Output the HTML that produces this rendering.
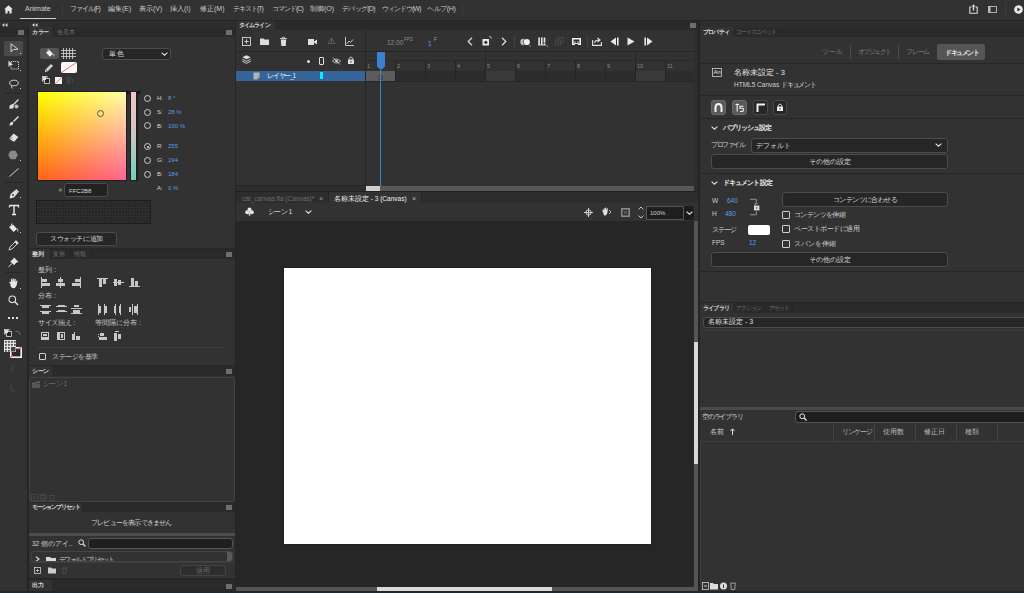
<!DOCTYPE html>
<html><head><meta charset="utf-8">
<style>
*{margin:0;padding:0;box-sizing:border-box}
html,body{width:1024px;height:593px;overflow:hidden;background:#1f1f1f}
body{font-family:"Liberation Sans",sans-serif;position:relative;font-feature-settings:"palt"}
.a{position:absolute}
.t{position:absolute;font-size:7px;line-height:8px;color:#c8c8c8;white-space:nowrap}
.hd{position:absolute;background:#2a2a2a}
.tab{position:absolute;background:#323232;font-size:6px;line-height:10px;color:#d8d8d8;padding-left:3px;font-weight:bold;white-space:nowrap}
.tabd{position:absolute;font-size:6px;line-height:10px;color:#707070;padding-left:3px;white-space:nowrap;border-right:1px solid #262626}
.mi{position:absolute;width:6px;height:5px;background:#6e6e6e}
.btn{position:absolute;background:#262626;border:1px solid #4c4c4c;border-radius:3px;font-size:7px;color:#d8d8d8;text-align:center;white-space:nowrap}
.ln{position:absolute;background:#242424}
.blue{color:#5b9ee8}
svg{position:absolute;overflow:visible}
</style></head><body>
<!-- ============ MENU BAR ============ -->
<div class="a" style="left:0;top:0;width:1024px;height:21px;background:#323232"></div>
<svg style="left:4px;top:5px" width="9" height="9" viewBox="0 0 9 9"><path d="M4.5 0.3 L8.8 4.3 L7.6 4.3 L7.6 8.6 L5.4 8.6 L5.4 6 L3.6 6 L3.6 8.6 L1.4 8.6 L1.4 4.3 L0.2 4.3 Z" fill="#e8e8e8"/></svg>
<div class="t" style="left:25px;top:5px;font-size:7px;color:#d0d0d0">Animate</div>
<div class="a" style="left:20px;top:18px;width:36px;height:1px;background:#d0d0d0"></div>
<div class="a" style="left:62px;top:4px;width:1px;height:12px;background:#3c3c3c"></div>
<div class="t" style="left:70px;top:5px;letter-spacing:-1px">ファイル(F)</div>
<div class="t" style="left:108px;top:5px">編集(E)</div>
<div class="t" style="left:139px;top:5px">表示(V)</div>
<div class="t" style="left:170px;top:5px">挿入(I)</div>
<div class="t" style="left:200px;top:5px">修正(M)</div>
<div class="t" style="left:233px;top:5px;letter-spacing:-1px">テキスト(T)</div>
<div class="t" style="left:272px;top:5px;letter-spacing:-1px">コマンド(C)</div>
<div class="t" style="left:310px;top:5px">制御(O)</div>
<div class="t" style="left:342px;top:5px;letter-spacing:-0.7px">デバッグ(D)</div>
<div class="t" style="left:382px;top:5px;letter-spacing:-1px">ウィンドウ(W)</div>
<div class="t" style="left:427px;top:5px;letter-spacing:-0.4px">ヘルプ(H)</div>
<div class="a" style="left:462px;top:4px;width:1px;height:12px;background:#3c3c3c"></div>
<!-- right icons -->
<svg style="left:969px;top:4px" width="9" height="10" viewBox="0 0 9 10"><path d="M4.5 0.8 V6.5" stroke="#e0e0e0" stroke-width="1.4"/><path d="M2.6 2.6 L4.5 0.5 L6.4 2.6 Z" fill="#e0e0e0"/><path d="M2.5 3 H0.8 V9.2 H8.2 V3 H6.5" stroke="#dcdcdc" stroke-width="1.1" fill="none"/></svg>
<svg style="left:988px;top:6px" width="9" height="7" viewBox="0 0 9 7"><rect x="0.5" y="0.5" width="8" height="6" stroke="#bdbdbd" stroke-width="0.9" fill="none"/><rect x="0.5" y="0.5" width="2" height="6" fill="#bdbdbd"/></svg>
<div class="a" style="left:1005px;top:3px;width:1px;height:13px;background:#3c3c3c"></div>
<svg style="left:1013.5px;top:4.5px" width="9" height="9" viewBox="0 0 9 9"><circle cx="4.5" cy="4.5" r="4.3" fill="#ececec"/><path d="M3.3 2.5 L6.6 4.5 L3.3 6.5 Z" fill="#323232"/></svg>

<!-- collapse strip -->
<div class="a" style="left:0;top:20px;width:1024px;height:1px;background:#262626"></div>
<div class="a" style="left:0;top:21px;width:1024px;height:6px;background:#2e2e2e"></div>
<svg style="left:2px;top:23px" width="6" height="4" viewBox="0 0 6 4"><path d="M0 2 L2.5 0 V4 Z M3 2 L5.5 0 V4 Z" fill="#cfcfcf"/></svg>
<svg style="left:32px;top:23px" width="6" height="4" viewBox="0 0 6 4"><path d="M0 2 L2.5 0 V4 Z M3 2 L5.5 0 V4 Z" fill="#cfcfcf"/></svg><div class="a" style="left:4px;top:30px;width:1px;height:4px;background:#6a9ad0"></div>

<!-- ============ LEFT TOOLBAR ============ -->
<div class="a" style="left:0;top:27px;width:27px;height:566px;background:#323232"></div>
<div class="hd" style="left:0;top:27px;width:27px;height:10px"></div>
<div class="mi" style="left:18px;top:30px"></div>
<div class="a" style="left:27px;top:27px;width:2px;height:566px;background:#252525"></div>

<!-- tool icons -->
<div class="a" style="left:4px;top:41px;width:19px;height:15px;background:#4a4a4a;border-radius:2px"></div>
<svg style="left:10px;top:43px" width="9" height="10" viewBox="0 0 9 10"><path d="M1 0.8 L1 8.8 L3.3 6.6 L8 6.2 Z" stroke="#e0e0e0" stroke-width="0.9" fill="none"/></svg>
<div class="a" style="left:20px;top:53px;width:1px;height:1px;background:#ccc"></div>
<svg style="left:8px;top:60px" width="12" height="11" viewBox="0 0 12 11"><path d="M0.5 0.5 L0.5 7 L2.5 5 L5 5 Z" fill="#e0e0e0"/><rect x="3" y="1.5" width="7.5" height="7.5" stroke="#d8d8d8" stroke-width="0.9" stroke-dasharray="1.2 0.8" fill="none"/></svg>
<div class="a" style="left:20px;top:70px;width:1px;height:1px;background:#ccc"></div>
<svg style="left:9px;top:79px" width="10" height="10" viewBox="0 0 10 10"><ellipse cx="5" cy="4" rx="4.3" ry="2.8" stroke="#d8d8d8" stroke-width="0.9" fill="none"/><path d="M2.5 6 Q2 8 3.5 9.5" stroke="#d8d8d8" stroke-width="0.9" fill="none"/></svg>
<div class="a" style="left:20px;top:88px;width:1px;height:1px;background:#ccc"></div>
<div class="a" style="left:5px;top:93px;width:17px;height:1px;background:#262626"></div>
<svg style="left:9px;top:99px" width="10" height="10" viewBox="0 0 10 10"><path d="M9.5 0.5 L4 6 M1 9 Q1 6 3.5 6 Q5 7 3.5 8.8 Z" stroke="#e0e0e0" stroke-width="1.3" fill="#e0e0e0"/><circle cx="7.5" cy="7.5" r="2" fill="#bbb"/></svg>
<svg style="left:9px;top:116px" width="10" height="10" viewBox="0 0 10 10"><path d="M9.5 0.5 L4.5 5.5" stroke="#e0e0e0" stroke-width="1.5"/><path d="M0.5 9.5 Q0.8 6 3.6 5.8 Q5 7 3.8 8.6 Q2.5 9.8 0.5 9.5 Z" fill="#e0e0e0"/></svg>
<svg style="left:8px;top:133px" width="11" height="10" viewBox="0 0 11 10"><path d="M5.5 0.5 L10.3 4 L6 9 L1 6 Z" fill="#e0e0e0"/><path d="M1 6 L3.8 8.2 L6 9" stroke="#323232" stroke-width="0.7" fill="none"/><path d="M2 6.5 L4 4.5" stroke="#323232" stroke-width="0.8"/></svg>
<svg style="left:8px;top:150px" width="10" height="10" viewBox="0 0 10 10"><path d="M2.5 0.8 L7.5 0.8 L9.8 5 L7.5 9.2 L2.5 9.2 L0.2 5 Z" fill="#8a8a8a"/></svg>
<div class="a" style="left:20px;top:160px;width:1px;height:1px;background:#ccc"></div>
<svg style="left:9px;top:168px" width="10" height="9" viewBox="0 0 10 9"><path d="M0.5 8.5 L9.5 0.5" stroke="#d8d8d8" stroke-width="1"/></svg>
<div class="a" style="left:5px;top:182px;width:17px;height:1px;background:#262626"></div>
<svg style="left:9px;top:189px" width="10" height="10" viewBox="0 0 10 10"><path d="M0.5 9.5 L1.6 5 L6 1.2 L8.8 4 L5 8.4 Z" fill="#e0e0e0"/><path d="M6 1.2 L7.3 0 L10 2.7 L8.8 4" fill="#e0e0e0"/><circle cx="4" cy="6" r="0.9" fill="#323232"/></svg>
<div class="a" style="left:20px;top:197px;width:1px;height:1px;background:#ccc"></div>
<svg style="left:9px;top:205px" width="10" height="10" viewBox="0 0 10 10"><path d="M0.5 0.5 L9.5 0.5 L9.5 2.5 M0.5 0.5 L0.5 2.5 M5 0.5 L5 9.5 M3 9.5 L7 9.5" stroke="#e8e8e8" stroke-width="1.4" fill="none"/></svg>
<svg style="left:8px;top:223px" width="11" height="10" viewBox="0 0 11 10"><path d="M1 4 L5 1.5 L9 6 L5.5 9 Z" fill="#e8e8e8"/><path d="M4 0.5 L3 2.5" stroke="#e8e8e8" stroke-width="0.9"/><path d="M9 5.5 Q10.5 7 9.6 8.5" stroke="#d8d8d8" stroke-width="0.9" fill="none"/></svg>
<div class="a" style="left:20px;top:232px;width:1px;height:1px;background:#ccc"></div>
<svg style="left:8px;top:240px" width="11" height="11" viewBox="0 0 11 11"><path d="M1 10 L2 7 L7 2 L9 4 L4 9 Z" stroke="#e0e0e0" stroke-width="0.9" fill="none"/><path d="M6.5 1.5 L8 0.3 L10.7 3 L9.5 4.5 Z" fill="#e0e0e0"/></svg>
<svg style="left:8px;top:257px" width="11" height="10" viewBox="0 0 11 10"><path d="M6 0.5 L10.5 5 L8.5 5.5 L6.5 7.5 L6.5 8.5 L2 4 L3 4 L5 2 Z" fill="#e8e8e8"/><path d="M4 6.5 L0.5 9.8" stroke="#e0e0e0" stroke-width="1"/></svg>
<div class="a" style="left:5px;top:272px;width:17px;height:1px;background:#262626"></div>
<svg style="left:8px;top:278px" width="11" height="11" viewBox="0 0 11 11"><path d="M2.5 6 L1 4.2 Q1.5 3.2 2.5 4 L3 4.7 L2.8 1.3 Q3.5 0.5 4 1.3 L4.5 4 L4.6 0.6 Q5.3 -0.2 5.8 0.6 L6 4 L6.6 1 Q7.3 0.4 7.8 1.2 L7.6 4.6 L8.6 2.6 Q9.5 2.4 9.5 3.3 L8.6 7.5 Q7.5 10.3 5 10.3 Q3.2 10 2.5 8 Z" fill="#e8e8e8"/></svg>
<div class="a" style="left:20px;top:288px;width:1px;height:1px;background:#ccc"></div>
<svg style="left:8px;top:295px" width="11" height="11" viewBox="0 0 11 11"><circle cx="4.3" cy="4.3" r="3.3" stroke="#e0e0e0" stroke-width="1.1" fill="none"/><path d="M6.6 6.6 L10 10" stroke="#e0e0e0" stroke-width="1.4"/></svg>
<div class="a" style="left:8px;top:317px;width:2px;height:2px;background:#e0e0e0"></div>
<div class="a" style="left:12px;top:317px;width:2px;height:2px;background:#e0e0e0"></div>
<div class="a" style="left:16px;top:317px;width:2px;height:2px;background:#e0e0e0"></div>
<svg style="left:4px;top:329px" width="8" height="8" viewBox="0 0 8 8"><rect x="0.5" y="0.5" width="4.5" height="4.5" stroke="#ddd" fill="none" stroke-width="0.8"/><rect x="2.5" y="2.5" width="5" height="5" stroke="#ddd" fill="#222" stroke-width="0.8"/><rect x="1" y="1" width="3" height="3" fill="#ddd"/></svg>
<svg style="left:15px;top:330px" width="6" height="6" viewBox="0 0 6 6"><path d="M0.5 1.5 Q4.5 0.5 5 5" stroke="#777" stroke-width="0.8" fill="none"/></svg>
<svg style="left:4px;top:340px" width="19" height="19" viewBox="0 0 19 19"><rect x="6.8" y="7.8" width="10.4" height="9.4" stroke="#f4f4f4" stroke-width="1.6" fill="#2a2a2a"/><path d="M14.5 9.5 L18 6.5 M6 17.8 L9 15" stroke="#ff2020" stroke-width="1"/><rect x="0" y="0" width="12" height="12" fill="#e4e4e4"/><rect x="1" y="1" width="1.8" height="1.8" fill="#555"/><rect x="1" y="4" width="1.8" height="1.8" fill="#555"/><rect x="1" y="7" width="1.8" height="1.8" fill="#555"/><rect x="1" y="10" width="1.8" height="1.8" fill="#555"/><rect x="4" y="1" width="1.8" height="1.8" fill="#555"/><rect x="4" y="4" width="1.8" height="1.8" fill="#555"/><rect x="4" y="7" width="1.8" height="1.8" fill="#555"/><rect x="4" y="10" width="1.8" height="1.8" fill="#555"/><rect x="7" y="1" width="1.8" height="1.8" fill="#555"/><rect x="7" y="4" width="1.8" height="1.8" fill="#555"/><rect x="10" y="1" width="1.8" height="1.8" fill="#555"/><rect x="10" y="4" width="1.8" height="1.8" fill="#555"/><rect x="7" y="7" width="4.5" height="4.5" fill="#444"/></svg>
<svg style="left:10px;top:365px" width="6" height="10" viewBox="0 0 6 10"><path d="M5 1 Q0.5 1.5 1.5 4.5 Q5 6 1 9" stroke="#4a4a4a" stroke-width="0.9" fill="none"/></svg>
<svg style="left:10px;top:383px" width="6" height="10" viewBox="0 0 6 10"><path d="M1 1 L1 7 Q1 9 4 8 L5 7" stroke="#4a4a4a" stroke-width="0.9" fill="none"/></svg>

<!-- ============ LEFT PANELS ============ -->
<div class="a" style="left:29px;top:27px;width:206px;height:566px;background:#323232"></div>
<!-- color panel header -->
<div class="hd" style="left:29px;top:27px;width:206px;height:10px"></div>
<div class="tab" style="left:29px;top:27px;width:23px;letter-spacing:-0.5px">カラー</div>
<div class="tabd" style="left:54px;top:27px;width:24px">色見本</div>
<div class="mi" style="left:226px;top:30px"></div>
<!-- color tools -->
<div class="a" style="left:40px;top:48px;width:19px;height:11px;background:#555;border-radius:2px"></div>
<svg style="left:45px;top:48px" width="10" height="10" viewBox="0 0 10 10"><path d="M1 4.5 L4.5 2 L8 6 L4.8 8.8 Z" fill="#eee"/><path d="M3.5 0.8 L2.8 2.5" stroke="#eee" stroke-width="0.8"/><path d="M8 5.5 Q9.5 6.8 8.8 8.2" stroke="#ddd" stroke-width="0.8" fill="none"/></svg>
<svg style="left:61px;top:48px" width="15" height="11" viewBox="0 0 15 11"><path d="M0 2.5 H15 M0 5.5 H15 M0 8.5 H15 M2.5 0 V11 M5.5 0 V11 M8.5 0 V11 M11.5 0 V11" stroke="#d8d8d8" stroke-width="0.8"/></svg>
<svg style="left:44px;top:63px" width="10" height="10" viewBox="0 0 10 10"><path d="M0.8 9.2 L1.5 6.5 L7 1 L9 3 L3.5 8.5 Z" fill="#cfcfcf"/><path d="M1.5 6.5 L3.5 8.5" stroke="#323232" stroke-width="0.6"/></svg>
<div class="a" style="left:61px;top:62px;width:16px;height:11px;background:#fafafa;border-radius:2px;overflow:hidden"></div>
<svg style="left:61px;top:62px" width="16" height="11" viewBox="0 0 16 11"><path d="M0.5 10.5 L15.5 0.5" stroke="#ff5a5a" stroke-width="0.9"/></svg>
<svg style="left:42px;top:76px" width="8" height="8" viewBox="0 0 8 8"><rect x="0.5" y="0.5" width="4.5" height="4.5" stroke="#ddd" fill="none" stroke-width="0.8"/><rect x="2.5" y="2.5" width="5" height="5" stroke="#ddd" fill="#222" stroke-width="0.8"/><rect x="1" y="1" width="3" height="3" fill="#ddd"/></svg>
<div class="a" style="left:55px;top:77px;width:7px;height:7px;background:#f4f4f4"></div>
<svg style="left:55px;top:77px" width="7" height="7" viewBox="0 0 7 7"><path d="M0.3 6.7 L6.7 0.3" stroke="#ff5050" stroke-width="0.8"/></svg>
<svg style="left:67px;top:77px" width="7" height="7" viewBox="0 0 7 7"><rect x="0.5" y="0.5" width="2.5" height="2.5" stroke="#555" stroke-width="0.6" fill="none"/><rect x="0.5" y="4" width="2.5" height="2.5" stroke="#555" stroke-width="0.6" fill="none"/><path d="M4 1 Q6.5 2 6 5 L4.5 5.5" stroke="#555" stroke-width="0.7" fill="none"/></svg>
<!-- dropdown -->
<div class="btn" style="left:102px;top:48px;width:69px;height:12px;text-align:left;padding-left:6px;font-size:7px;line-height:10px;letter-spacing:1px">単色</div>
<svg style="left:161px;top:52px" width="7" height="4" viewBox="0 0 7 4"><path d="M0.6 0.6 L3.5 3.2 L6.4 0.6" stroke="#e0e0e0" stroke-width="1.1" fill="none"/></svg>
<!-- color square -->
<div class="a" style="left:37px;top:91px;width:90px;height:90px;background:#1e1e1e"></div>
<div class="a" style="left:38px;top:92px;width:88px;height:88px;background:linear-gradient(to bottom,#ffff00,#ff6414)"></div>
<div class="a" style="left:38px;top:92px;width:88px;height:88px;background:linear-gradient(to bottom,#ffffa8,#ff6494);-webkit-mask-image:linear-gradient(to right,transparent,#000)"></div>
<div class="a" style="left:97px;top:110px;width:7px;height:7px;border:1px solid #555;border-radius:50%"></div>
<!-- slider -->
<div class="a" style="left:130px;top:91px;width:8px;height:90px;background:#1e1e1e"></div>
<div class="a" style="left:131px;top:92px;width:5px;height:88px;background:linear-gradient(to bottom,#f4c4c4,#c8c8c0 50%,#6cd0c0)"></div>
<svg style="left:127px;top:90px" width="13" height="5" viewBox="0 0 13 5"><path d="M0 0 L3 2.5 L0 5 Z M13 0 L10 2.5 L13 5 Z" fill="#111"/></svg>
<!-- values -->
<div class="a" style="left:144px;top:95px;width:7px;height:7px;border:1.2px solid #d0d0d0;border-radius:50%"></div>
<div class="a" style="left:144px;top:109px;width:7px;height:7px;border:1.2px solid #d0d0d0;border-radius:50%"></div>
<div class="a" style="left:144px;top:122px;width:7px;height:7px;border:1.2px solid #d0d0d0;border-radius:50%"></div>
<div class="a" style="left:144px;top:143px;width:7px;height:7px;border:1.2px solid #d0d0d0;border-radius:50%"></div>
<div class="a" style="left:146.5px;top:145.5px;width:2px;height:2px;background:#e8e8e8;border-radius:50%"></div>
<div class="a" style="left:144px;top:157px;width:7px;height:7px;border:1.2px solid #d0d0d0;border-radius:50%"></div>
<div class="a" style="left:144px;top:171px;width:7px;height:7px;border:1.2px solid #d0d0d0;border-radius:50%"></div>
<div class="t" style="left:157px;top:94px;font-size:6px;color:#d8d8d8">H:</div><div class="t blue" style="left:168px;top:94px;font-size:6px">8 °</div>
<div class="t" style="left:157px;top:108px;font-size:6px;color:#d8d8d8">S:</div><div class="t blue" style="left:168px;top:108px;font-size:6px">28 %</div>
<div class="t" style="left:157px;top:122px;font-size:6px;color:#d8d8d8">B:</div><div class="t blue" style="left:168px;top:122px;font-size:6px">100 %</div>
<div class="t" style="left:157px;top:142px;font-size:6px;color:#d8d8d8">R:</div><div class="t blue" style="left:168px;top:142px;font-size:6px">255</div>
<div class="t" style="left:157px;top:156px;font-size:6px;color:#d8d8d8">G:</div><div class="t blue" style="left:168px;top:156px;font-size:6px">194</div>
<div class="t" style="left:157px;top:170px;font-size:6px;color:#d8d8d8">B:</div><div class="t blue" style="left:168px;top:170px;font-size:6px">184</div>
<div class="t" style="left:157px;top:184px;font-size:6px;color:#d8d8d8">A:</div><div class="t blue" style="left:168px;top:184px;font-size:6px">0 %</div>
<!-- hex -->
<div class="t" style="left:59px;top:186px;font-size:5px;color:#aaa">#</div>
<div class="a" style="left:64px;top:183px;width:44px;height:14px;background:#222;border:1px solid #4c4c4c;border-radius:3px"></div>
<div class="t" style="left:69px;top:187px;font-size:6px;color:#d8d8d8">FFC2B8</div>
<!-- swatches -->
<div class="a" style="left:36px;top:200px;width:115px;height:24px;background-color:#262626;border:1px solid #1c1c1c;background-image:linear-gradient(#2e2e2e 1px,transparent 1px),linear-gradient(90deg,#2e2e2e 1px,transparent 1px);background-size:3px 3px"></div>
<div class="btn" style="left:36px;top:232px;width:81px;height:14px;line-height:12px;font-size:7px;letter-spacing:-0.4px">スウォッチに追加</div>

<!-- align panel -->
<div class="a" style="left:29px;top:248px;width:206px;height:1px;background:#262626"></div>
<div class="hd" style="left:29px;top:249px;width:206px;height:10px"></div>
<div class="tab" style="left:29px;top:249px;width:21px">整列</div>
<div class="tabd" style="left:50px;top:249px;width:21px">変形</div>
<div class="tabd" style="left:71px;top:249px;width:21px">情報</div>
<div class="mi" style="left:226px;top:252px"></div>
<div class="t" style="left:38px;top:266px">整列 :</div>
<div class="t" style="left:38px;top:292px">分布 :</div>
<div class="t" style="left:38px;top:319px;letter-spacing:-0.3px">サイズ揃え :</div>
<div class="t" style="left:95px;top:319px">等間隔に分布 :</div>
<svg style="left:40px;top:277px" width="11" height="11" viewBox="0 0 11 11"><rect x="1" y="0" width="1" height="11" fill="#c8c8c8"/><rect x="2" y="2" width="5" height="3" fill="#c8c8c8"/><rect x="2" y="6" width="8" height="3" fill="#c8c8c8"/></svg>
<svg style="left:55px;top:277px" width="11" height="11" viewBox="0 0 11 11"><rect x="5" y="0" width="1" height="11" fill="#c8c8c8"/><rect x="3" y="2" width="5" height="3" fill="#c8c8c8"/><rect x="1" y="6" width="9" height="3" fill="#c8c8c8"/></svg>
<svg style="left:71px;top:277px" width="11" height="11" viewBox="0 0 11 11"><rect x="9" y="0" width="1" height="11" fill="#c8c8c8"/><rect x="4" y="2" width="5" height="3" fill="#c8c8c8"/><rect x="1" y="6" width="8" height="3" fill="#c8c8c8"/></svg>
<svg style="left:97px;top:277px" width="11" height="11" viewBox="0 0 11 11"><rect x="0" y="1" width="11" height="1" fill="#c8c8c8"/><rect x="2" y="2" width="3" height="8" fill="#c8c8c8"/><rect x="6" y="2" width="3" height="5" fill="#c8c8c8"/></svg>
<svg style="left:113px;top:277px" width="11" height="11" viewBox="0 0 11 11"><rect x="0" y="5" width="11" height="1" fill="#c8c8c8"/><rect x="1" y="2" width="3" height="7" fill="#c8c8c8"/><rect x="5" y="3" width="3" height="5" fill="#c8c8c8"/></svg>
<svg style="left:129px;top:277px" width="11" height="11" viewBox="0 0 11 11"><rect x="0" y="9" width="11" height="1" fill="#c8c8c8"/><rect x="2" y="1" width="3" height="8" fill="#c8c8c8"/><rect x="6" y="4" width="3" height="5" fill="#c8c8c8"/></svg>
<svg style="left:40px;top:304px" width="11" height="11" viewBox="0 0 11 11"><rect x="0" y="1" width="11" height="1" fill="#c8c8c8"/><rect x="2" y="2" width="7" height="2" fill="#c8c8c8"/><rect x="0" y="7" width="11" height="1" fill="#c8c8c8"/><rect x="2" y="8" width="7" height="2" fill="#c8c8c8"/></svg>
<svg style="left:56px;top:304px" width="11" height="11" viewBox="0 0 11 11"><rect x="0" y="2" width="11" height="1" fill="#c8c8c8"/><rect x="2" y="1" width="7" height="2" fill="#c8c8c8"/><rect x="0" y="7" width="11" height="1" fill="#c8c8c8"/><rect x="2" y="6" width="7" height="2" fill="#c8c8c8"/></svg>
<svg style="left:71px;top:304px" width="11" height="11" viewBox="0 0 11 11"><rect x="3" y="1" width="5" height="2" fill="#c8c8c8"/><rect x="0" y="4" width="11" height="1" fill="#c8c8c8"/><rect x="2" y="6" width="7" height="3" fill="#c8c8c8"/><rect x="0" y="9" width="11" height="1" fill="#c8c8c8"/></svg>
<svg style="left:97px;top:304px" width="11" height="11" viewBox="0 0 11 11"><rect x="1" y="0" width="1" height="11" fill="#c8c8c8"/><rect x="2" y="2" width="2" height="7" fill="#c8c8c8"/><rect x="7" y="0" width="1" height="11" fill="#c8c8c8"/><rect x="8" y="2" width="2" height="7" fill="#c8c8c8"/></svg>
<svg style="left:113px;top:304px" width="11" height="11" viewBox="0 0 11 11"><rect x="2" y="0" width="1" height="11" fill="#c8c8c8"/><rect x="1" y="2" width="2" height="7" fill="#c8c8c8"/><rect x="7" y="0" width="1" height="11" fill="#c8c8c8"/><rect x="6" y="2" width="2" height="7" fill="#c8c8c8"/></svg>
<svg style="left:128px;top:304px" width="11" height="11" viewBox="0 0 11 11"><rect x="1" y="3" width="2" height="5" fill="#c8c8c8"/><rect x="4" y="0" width="1" height="11" fill="#c8c8c8"/><rect x="6" y="2" width="3" height="7" fill="#c8c8c8"/><rect x="9" y="0" width="1" height="11" fill="#c8c8c8"/></svg>
<svg style="left:40px;top:331px" width="11" height="11" viewBox="0 0 11 11"><rect x="1.5" y="1.5" width="7" height="7" stroke="#c8c8c8" stroke-width="1" fill="none"/><rect x="1" y="6" width="8" height="3" fill="#c8c8c8"/><rect x="3" y="3" width="4" height="2" fill="#c8c8c8"/></svg>
<svg style="left:56px;top:331px" width="11" height="11" viewBox="0 0 11 11"><rect x="1.5" y="1.5" width="7" height="7" stroke="#c8c8c8" stroke-width="1" fill="none"/><rect x="1" y="1" width="3" height="8" fill="#c8c8c8"/><rect x="5" y="3" width="2" height="4" fill="#c8c8c8"/></svg>
<svg style="left:71px;top:331px" width="11" height="11" viewBox="0 0 11 11"><rect x="1" y="1" width="3" height="8" fill="#c8c8c8"/><rect x="5" y="5" width="4" height="4" fill="#c8c8c8"/><rect x="1" y="1" width="2" height="2" fill="#323232"/></svg>
<svg style="left:97px;top:331px" width="11" height="11" viewBox="0 0 11 11"><rect x="1" y="3" width="1" height="1" fill="#c8c8c8"/><rect x="1" y="5" width="1" height="1" fill="#c8c8c8"/><rect x="3" y="2" width="4" height="3" fill="#c8c8c8"/><rect x="2" y="6" width="8" height="3" fill="#c8c8c8"/></svg>
<svg style="left:113px;top:331px" width="11" height="11" viewBox="0 0 11 11"><rect x="2" y="0" width="4" height="1" fill="#c8c8c8"/><rect x="1" y="2" width="3" height="8" fill="#c8c8c8"/><rect x="5" y="3" width="3" height="5" fill="#c8c8c8"/></svg>
<div class="a" style="left:37px;top:347px;width:188px;height:1px;background:#3e3e3e"></div>
<div class="a" style="left:39px;top:353px;width:7px;height:7px;border:1px solid #cfcfcf;border-radius:1px"></div>
<div class="t" style="left:52px;top:353px;letter-spacing:-0.5px">ステージを基準</div>
<!-- scene panel -->
<div class="a" style="left:29px;top:365px;width:206px;height:1px;background:#262626"></div>
<div class="hd" style="left:29px;top:366px;width:206px;height:10px"></div>
<div class="tab" style="left:29px;top:366px;width:23px;letter-spacing:-0.5px">シーン</div>
<div class="mi" style="left:226px;top:369px"></div>
<div class="a" style="left:29px;top:377px;width:206px;height:125px;border:1px solid #444;border-radius:3px;background:#323232"></div>
<svg style="left:32px;top:381px" width="8" height="7" viewBox="0 0 8 7"><rect x="0" y="2.5" width="8" height="4.5" fill="#555"/><path d="M0 2 L8 0 L8 1.5 L0 3" fill="#666"/></svg>
<div class="t" style="left:43px;top:380px;color:#6e6e6e;letter-spacing:-0.6px">シーン 1</div>
<svg style="left:31px;top:494px" width="25" height="7" viewBox="0 0 25 7"><rect x="0.5" y="0.5" width="6" height="6" stroke="#4a4a4a" fill="none" stroke-width="0.8"/><path d="M3.5 2 V5 M2 3.5 H5" stroke="#4a4a4a" stroke-width="0.7"/><rect x="9" y="1.5" width="5" height="5" stroke="#4a4a4a" fill="none" stroke-width="0.8"/><rect x="10.5" y="0" width="4.5" height="4.5" stroke="#4a4a4a" fill="none" stroke-width="0.8"/><path d="M18 1.5 H24 M19 2 V6.5 H23 V2" stroke="#4a4a4a" stroke-width="0.8" fill="none"/></svg>
<!-- motion preset -->
<div class="a" style="left:29px;top:502px;width:206px;height:1px;background:#262626"></div>
<div class="hd" style="left:29px;top:503px;width:206px;height:9px"></div>
<div class="tab" style="left:29px;top:503px;width:53px;height:9px;line-height:9px;font-size:5.5px;letter-spacing:-1.2px">モーションプリセット</div>
<div class="mi" style="left:226px;top:505px"></div>
<div class="t" style="left:91px;top:519px;color:#d0d0d0;letter-spacing:-0.8px">プレビューを表示できません</div>
<div class="a" style="left:29px;top:533px;width:206px;height:3px;background:#4c4c4c"></div>
<div class="t" style="left:32px;top:540px;font-size:6.5px;color:#d0d0d0">32 個のアイ..</div>
<svg style="left:78px;top:539px" width="8" height="8" viewBox="0 0 8 8"><circle cx="3.2" cy="3.2" r="2.4" stroke="#ddd" stroke-width="1" fill="none"/><path d="M5 5 L7.5 7.5" stroke="#ddd" stroke-width="1.2"/></svg>
<div class="a" style="left:88px;top:538px;width:145px;height:11px;background:#1f1f1f;border:1px solid #555;border-radius:3px"></div>
<div class="a" style="left:31px;top:551px;width:202px;height:11px;border:1px solid #444;border-radius:3px;overflow:hidden">
<svg style="left:3px;top:4px" width="5" height="6" viewBox="0 0 5 6"><path d="M1 0.7 L4 3 L1 5.3" stroke="#ddd" stroke-width="1.1" fill="none"/></svg>
<svg style="left:14px;top:4px" width="10" height="8" viewBox="0 0 10 8"><path d="M0 1 H4 L5 2 H10 V8 H0 Z" fill="#d8d8d8"/></svg>
<div class="t" style="left:27px;top:4px;color:#ccc;letter-spacing:-1.6px">デフォルトプリセット</div>
<div class="a" style="left:195px;top:0px;width:6px;height:11px;background:#5a5a5a"></div>
</div>
<div class="a" style="left:29px;top:562px;width:206px;height:1px;background:#3c3c3c"></div>
<svg style="left:34px;top:567px" width="36" height="7" viewBox="0 0 36 7"><rect x="0.5" y="0.5" width="6" height="6" stroke="#ccc" fill="none" stroke-width="0.8"/><path d="M3.5 2 V5 M2 3.5 H5" stroke="#ccc" stroke-width="0.8"/><path d="M14 0.5 H17 L18 1.5 H22 V6.5 H14 Z" fill="#ccc"/><path d="M28 1 H33 M28.5 1.5 L29 6.5 H32 L32.5 1.5" stroke="#555" stroke-width="0.8" fill="none"/></svg>
<div class="btn" style="left:180px;top:565px;width:46px;height:11px;line-height:9px;color:#666;border-color:#444;background:#2e2e2e">適用</div>
<!-- output header -->
<div class="a" style="left:29px;top:578px;width:206px;height:2px;background:#262626"></div>
<div class="hd" style="left:29px;top:580px;width:206px;height:13px"></div>
<div class="tab" style="left:29px;top:580px;width:23px;height:13px;font-size:6px;line-height:11px">出力</div>
<div class="mi" style="left:226px;top:584px"></div>

<!-- ============ TIMELINE ============ -->
<div class="a" style="left:235px;top:21px;width:1px;height:572px;background:#252525"></div>
<div class="a" style="left:236px;top:21px;width:462px;height:170px;background:#323232"></div>
<div class="hd" style="left:236px;top:21px;width:462px;height:9px"></div>
<div class="tab" style="left:236px;top:21px;width:39px;height:9px;line-height:9px;letter-spacing:-0.9px">タイムライン</div>
<div class="mi" style="left:690px;top:23px"></div>
<!-- toolbar -->
<svg style="left:242px;top:37px" width="9" height="9" viewBox="0 0 9 9"><rect x="0.5" y="0.5" width="8" height="8" stroke="#d8d8d8" fill="none" stroke-width="0.9"/><path d="M4.5 2.3 V6.7 M2.3 4.5 H6.7" stroke="#d8d8d8" stroke-width="0.9"/></svg>
<svg style="left:260px;top:38px" width="9" height="7" viewBox="0 0 9 7"><path d="M0 0.5 H3.5 L4.5 1.5 H9 V7 H0 Z" fill="#dcdcdc"/></svg>
<svg style="left:280px;top:37px" width="7" height="9" viewBox="0 0 7 9"><path d="M0 1.5 H7 M2.5 1.5 V0.3 H4.5 V1.5" stroke="#dcdcdc" stroke-width="0.8" fill="none"/><path d="M0.8 2.5 H6.2 L5.7 9 H1.3 Z" fill="#dcdcdc"/></svg>
<svg style="left:308px;top:39px" width="9" height="6" viewBox="0 0 9 6"><rect x="0" y="0" width="6" height="6" fill="#e0e0e0"/><path d="M6 2.5 L9 0.5 V5.5 L6 3.5 Z" fill="#e0e0e0"/></svg>
<svg style="left:327px;top:37px" width="9" height="9" viewBox="0 0 9 9"><path d="M4.5 1 L1 6.5 H8 Z M4.5 1 V6.5" stroke="#666" stroke-width="0.8" fill="none"/></svg>
<svg style="left:345px;top:37px" width="9" height="9" viewBox="0 0 9 9"><path d="M0.5 0 V8.5 H9 M1.5 7 L4 4 L5.5 5.5 L8 2.5" stroke="#cfcfcf" stroke-width="0.9" fill="none"/></svg>
<div class="a" style="left:236px;top:51px;width:129px;height:1px;background:#262626"></div>
<!-- layer header -->
<svg style="left:242px;top:55px" width="9" height="9" viewBox="0 0 9 9"><path d="M4.5 0.3 L8.7 2.3 L4.5 4.3 L0.3 2.3 Z" fill="#e0e0e0"/><path d="M0.3 4.3 L4.5 6.3 L8.7 4.3 M0.3 6.3 L4.5 8.3 L8.7 6.3" stroke="#e0e0e0" stroke-width="0.9" fill="none"/></svg>
<div class="a" style="left:307px;top:60px;width:3px;height:3px;background:#e0e0e0;border-radius:50%"></div>
<div class="a" style="left:319px;top:57px;width:5px;height:8px;border:1px solid #e0e0e0;border-radius:1px"></div>
<svg style="left:332px;top:57px" width="9" height="8" viewBox="0 0 9 8"><path d="M0.5 4 Q4.5 0 8.5 4 Q4.5 8 0.5 4 Z" stroke="#d8d8d8" stroke-width="0.8" fill="none"/><circle cx="4.5" cy="4" r="1.3" fill="#d8d8d8"/><path d="M1 0.5 L8 7.5" stroke="#d8d8d8" stroke-width="0.8"/></svg>
<svg style="left:348px;top:56px" width="6" height="8" viewBox="0 0 6 8"><path d="M1.3 3.5 V2.2 Q3 -0.3 4.7 2.2 V3.5" stroke="#e0e0e0" stroke-width="0.9" fill="none"/><rect x="0" y="3.5" width="6" height="4.5" fill="#e0e0e0"/><rect x="2.5" y="5" width="1" height="1.5" fill="#323232"/></svg>
<!-- layer row -->
<div class="a" style="left:236px;top:71px;width:129px;height:10px;background:#35649b"></div>
<svg style="left:253px;top:72px" width="7" height="8" viewBox="0 0 7 8"><path d="M0.5 0.5 H6.5 V5.5 L4.5 7.5 H0.5 Z" fill="#b4b4b4"/><path d="M4.5 7.5 V5.5 H6.5" stroke="#888" stroke-width="0.7" fill="none"/></svg>
<div class="t" style="left:267px;top:72px;color:#e8e8e8;font-size:6.5px;letter-spacing:-1.2px">レイヤー_1</div>
<div class="a" style="left:320px;top:72px;width:3px;height:7px;background:#00f0ff"></div>
<div class="a" style="left:236px;top:185px;width:129px;height:1px;background:#262626"></div>
<!-- frames area -->
<div class="a" style="left:365px;top:30px;width:1px;height:156px;background:#262626"></div>
<div class="a" style="left:366px;top:51px;width:332px;height:1px;background:#262626"></div>
<div class="a" style="left:366px;top:60px;width:328px;height:1px;background:#2a2a2a"></div>
<div class="a" style="left:366px;top:71px;width:328px;height:1px;background:#282828"></div>
<div class="a" style="left:366px;top:71px;width:328px;height:10px;background:#2c2c2c"></div>
<div class="a" style="left:366px;top:81px;width:328px;height:1px;background:#262626"></div>
<div class="a" style="left:366px;top:71px;width:29px;height:10px;background:#5c5c5c"></div>
<div class="a" style="left:486px;top:71px;width:29px;height:10px;background:#3a3a3a"></div>
<div class="a" style="left:636px;top:71px;width:29px;height:10px;background:#3a3a3a"></div>
<div class="a" style="left:485px;top:52px;width:1px;height:9px;background:#262626"></div>
<div class="a" style="left:635px;top:52px;width:1px;height:9px;background:#262626"></div>
<div class="a" style="left:395px;top:61px;width:1px;height:21px;background:#262626"></div>
<div class="a" style="left:425px;top:61px;width:1px;height:21px;background:#262626"></div>
<div class="a" style="left:455px;top:61px;width:1px;height:21px;background:#262626"></div>
<div class="a" style="left:485px;top:61px;width:1px;height:21px;background:#262626"></div>
<div class="a" style="left:515px;top:61px;width:1px;height:21px;background:#262626"></div>
<div class="a" style="left:545px;top:61px;width:1px;height:21px;background:#262626"></div>
<div class="a" style="left:575px;top:61px;width:1px;height:21px;background:#262626"></div>
<div class="a" style="left:605px;top:61px;width:1px;height:21px;background:#262626"></div>
<div class="a" style="left:635px;top:61px;width:1px;height:21px;background:#262626"></div>
<div class="a" style="left:665px;top:61px;width:1px;height:21px;background:#262626"></div>
<div class="t" style="left:367px;top:62px;font-size:5.5px;color:#8a8a8a">1</div>
<div class="t" style="left:397px;top:62px;font-size:5.5px;color:#8a8a8a">2</div>
<div class="t" style="left:427px;top:62px;font-size:5.5px;color:#8a8a8a">3</div>
<div class="t" style="left:457px;top:62px;font-size:5.5px;color:#8a8a8a">4</div>
<div class="t" style="left:487px;top:62px;font-size:5.5px;color:#8a8a8a">5</div>
<div class="t" style="left:517px;top:62px;font-size:5.5px;color:#8a8a8a">6</div>
<div class="t" style="left:547px;top:62px;font-size:5.5px;color:#8a8a8a">7</div>
<div class="t" style="left:577px;top:62px;font-size:5.5px;color:#8a8a8a">8</div>
<div class="t" style="left:607px;top:62px;font-size:5.5px;color:#8a8a8a">9</div>
<div class="t" style="left:637px;top:62px;font-size:5.5px;color:#8a8a8a">10</div>
<div class="t" style="left:667px;top:62px;font-size:5.5px;color:#8a8a8a">11</div>
<svg style="left:377px;top:74px" width="7" height="7" viewBox="0 0 7 7"><circle cx="3.5" cy="3.5" r="2.2" stroke="#3c3c3c" stroke-width="0.9" fill="none"/></svg>
<!-- playhead -->
<svg style="left:377px;top:52px" width="8" height="18" viewBox="0 0 8 18"><path d="M0.8 0 H7.2 Q8 0 8 0.8 V14.5 L4 18 L0 14.5 V0.8 Q0 0 0.8 0 Z" fill="#3a80d4"/></svg>
<div class="a" style="left:380px;top:70px;width:1px;height:116px;background:#3a80d4"></div>
<!-- fps -->
<div class="t" style="left:387px;top:39px;font-size:6.5px;color:#8e8e8e">12.00</div>
<div class="t" style="left:404px;top:36px;font-size:4.5px;color:#8e8e8e">FPS</div>
<div class="t" style="left:428px;top:40px;font-size:6.5px;color:#5b9ee8">1</div>
<div class="t" style="left:434px;top:36px;font-size:4.5px;color:#aaa">F</div>
<svg style="left:467px;top:37px" width="6" height="9" viewBox="0 0 6 9"><path d="M5 0.8 L1.2 4.5 L5 8.2" stroke="#e0e0e0" stroke-width="1.2" fill="none"/></svg>
<svg style="left:482px;top:36px" width="10" height="11" viewBox="0 0 10 11"><rect x="0.5" y="3" width="6.5" height="6.5" fill="#e8e8e8"/><circle cx="3.8" cy="6.3" r="1.6" fill="#323232"/><path d="M7 0.5 L8.5 0.5 L9.5 3" stroke="#e0e0e0" stroke-width="0.7" fill="none"/></svg>
<svg style="left:501px;top:37px" width="6" height="9" viewBox="0 0 6 9"><path d="M1 0.8 L4.8 4.5 L1 8.2" stroke="#e0e0e0" stroke-width="1.2" fill="none"/></svg>
<div class="a" style="left:514px;top:36px;width:1px;height:11px;background:#444"></div>
<svg style="left:520px;top:38px" width="11" height="8" viewBox="0 0 11 8"><circle cx="3.5" cy="4" r="3.2" fill="#bdbdbd"/><circle cx="6.8" cy="4" r="3.6" fill="#323232"/><circle cx="6.8" cy="4" r="3.1" fill="#f0f0f0"/><rect x="9.5" y="7.5" width="1" height="1" fill="#ccc"/></svg>
<svg style="left:538px;top:37px" width="10" height="10" viewBox="0 0 10 10"><rect x="0.3" y="0.5" width="1.6" height="7.5" fill="#e8e8e8"/><rect x="3" y="0.5" width="1.6" height="7.5" fill="#e8e8e8"/><rect x="5.7" y="0.5" width="1.6" height="5.2" fill="#e8e8e8"/><rect x="5.7" y="6.5" width="1.6" height="1.5" fill="#e8e8e8"/><rect x="0" y="7.6" width="8" height="0.8" fill="#e8e8e8"/><rect x="8.8" y="8.8" width="1" height="1" fill="#ccc"/></svg>
<svg style="left:555px;top:37px" width="9" height="9" viewBox="0 0 9 9"><rect x="0.5" y="3" width="5" height="5" stroke="#4a4a4a" fill="none" stroke-width="0.9"/><rect x="3" y="0.5" width="5" height="5" stroke="#4a4a4a" fill="none" stroke-width="0.9"/></svg>
<svg style="left:572px;top:38px" width="9" height="7" viewBox="0 0 9 7"><path d="M3 6.2 H0.8 V0.8 H8.2 V6.2 H6" stroke="#f0f0f0" stroke-width="1.6" fill="none"/><path d="M3 3.3 V5.5 H6 V3.3" stroke="#f0f0f0" stroke-width="0.9" fill="none"/></svg>
<div class="a" style="left:587px;top:36px;width:1px;height:11px;background:#444"></div>
<svg style="left:592px;top:37px" width="10" height="9" viewBox="0 0 10 9"><path d="M0.6 3 V8.4 H9.4 V5" stroke="#e0e0e0" stroke-width="1.1" fill="none"/><path d="M2.5 6 Q3 3 7 3 M5.5 1 L8 3 L5.5 5" stroke="#e0e0e0" stroke-width="1.1" fill="none"/></svg>
<svg style="left:610px;top:37px" width="9" height="9" viewBox="0 0 9 9"><path d="M6 0.5 V8.5 L0.5 4.5 Z" fill="#e8e8e8"/><rect x="7" y="0.5" width="1.6" height="8" fill="#e8e8e8"/></svg>
<svg style="left:627px;top:37px" width="8" height="9" viewBox="0 0 8 9"><path d="M0.5 0.5 V8.5 L7.5 4.5 Z" fill="#e8e8e8"/></svg>
<svg style="left:644px;top:37px" width="9" height="9" viewBox="0 0 9 9"><rect x="0.4" y="0.5" width="1.6" height="8" fill="#e8e8e8"/><path d="M3 0.5 V8.5 L8.5 4.5 Z" fill="#e8e8e8"/></svg>
<!-- timeline h scroll -->
<div class="a" style="left:236px;top:186px;width:462px;height:5px;background:#2e2e2e"></div>
<div class="a" style="left:380px;top:186px;width:314px;height:5px;background:#585858"></div>
<div class="a" style="left:366px;top:186px;width:14px;height:5px;background:#cfcfcf"></div>
<div class="a" style="left:694px;top:30px;width:4px;height:161px;background:#2e2e2e"></div>
<div class="a" style="left:698px;top:21px;width:2px;height:572px;background:#252525"></div>

<!-- ============ DOC TABS / STAGE ============ -->
<div class="a" style="left:236px;top:191px;width:462px;height:1px;background:#222"></div><div class="a" style="left:236px;top:192px;width:462px;height:11px;background:#2d2d2d"></div>
<div class="t" style="left:242px;top:195px;font-size:6.5px;color:#6e6e6e">cat_canvas.fla (Canvas)*</div>
<div class="t" style="left:319px;top:195px;font-size:7px;color:#9a9a9a">×</div>
<div class="a" style="left:328px;top:191px;width:1px;height:12px;background:#262626"></div>
<div class="a" style="left:329px;top:192px;width:92px;height:11px;background:#333"></div>
<div class="t" style="left:334px;top:195px;font-size:6.5px;color:#f0f0f0">名称未設定 - 3 (Canvas)</div>
<div class="t" style="left:412px;top:195px;font-size:7px;color:#bbb">×</div>
<div class="a" style="left:421px;top:191px;width:1px;height:12px;background:#262626"></div>
<!-- stage toolbar -->
<div class="a" style="left:236px;top:203px;width:462px;height:18px;background:#323232"></div>
<svg style="left:245px;top:207px" width="9" height="9" viewBox="0 0 9 9"><circle cx="4.5" cy="2.5" r="2" fill="#e8e8e8"/><circle cx="2.2" cy="5.3" r="2" fill="#e8e8e8"/><circle cx="6.8" cy="5.3" r="2" fill="#e8e8e8"/><path d="M4.5 4 L3.5 8.5 H5.5 Z" fill="#e8e8e8"/></svg>
<div class="t" style="left:268px;top:208px;color:#d8d8d8;letter-spacing:-0.6px">シーン 1</div>
<svg style="left:305px;top:210px" width="7" height="4" viewBox="0 0 7 4"><path d="M0.6 0.6 L3.5 3.2 L6.4 0.6" stroke="#e0e0e0" stroke-width="1.1" fill="none"/></svg>
<svg style="left:584px;top:208px" width="9" height="9" viewBox="0 0 9 9"><circle cx="4.5" cy="4.5" r="2.6" stroke="#ddd" stroke-width="0.9" fill="none"/><path d="M4.5 0 V9 M0 4.5 H9" stroke="#ddd" stroke-width="0.9"/></svg>
<svg style="left:601px;top:207px" width="11" height="10" viewBox="0 0 11 10"><path d="M2 5 L1 3.5 Q1.5 2.8 2.3 3.5 L2.6 1.5 Q3.2 1 3.6 1.5 L3.9 3.3 L4.2 0.8 Q4.8 0.3 5.2 0.8 L5.3 3.3 L5.9 1.3 Q6.5 1 6.8 1.5 L6.6 4.5 Q6.5 7.5 4.3 8.8 Q2.5 8.5 2 5 Z" fill="#e0e0e0"/><path d="M8 3 L10 5 L8 7" stroke="#ccc" stroke-width="0.8" fill="none"/></svg>
<svg style="left:621px;top:208px" width="9" height="9" viewBox="0 0 9 9"><rect x="0.8" y="0.8" width="7.4" height="7.4" stroke="#888" stroke-width="1.6" fill="none"/><rect x="3" y="3" width="3" height="3" fill="#555"/></svg>
<svg style="left:638px;top:206px" width="6" height="13" viewBox="0 0 6 13"><path d="M0.6 3.4 L3 1 L5.4 3.4 M0.6 9.6 L3 12 L5.4 9.6" stroke="#ddd" stroke-width="0.9" fill="none"/></svg>
<div class="a" style="left:646px;top:206px;width:38px;height:14px;background:#1e1e1e;border:1px solid #555"></div>
<div class="t" style="left:650px;top:209px;font-size:6px;color:#cfcfcf">100%</div>
<div class="a" style="left:684px;top:206px;width:10px;height:14px;background:#1c1c1c;border-radius:0 3px 3px 0"></div>
<svg style="left:686px;top:211px" width="7" height="4" viewBox="0 0 7 4"><path d="M0.6 0.6 L3.5 3.2 L6.4 0.6" stroke="#e8e8e8" stroke-width="1.1" fill="none"/></svg>
<!-- stage area -->
<div class="a" style="left:236px;top:221px;width:458px;height:370px;background:#262626"></div>
<div class="a" style="left:283px;top:267px;width:369px;height:278px;background:#202020"></div>
<div class="a" style="left:284px;top:268px;width:367px;height:276px;background:#ffffff"></div>
<!-- v scrollbar -->
<div class="a" style="left:694px;top:221px;width:4px;height:370px;background:#555"></div>
<div class="a" style="left:694px;top:342px;width:4px;height:122px;background:#d8d8d8"></div>
<!-- h scrollbar -->
<div class="a" style="left:236px;top:587px;width:458px;height:4px;background:#555"></div>
<div class="a" style="left:377px;top:587px;width:175px;height:4px;background:#dadada"></div>
<!-- bottom strip -->
<div class="a" style="left:0;top:591px;width:1024px;height:2px;background:#1b2935"></div>

<!-- ============ RIGHT PANEL ============ -->
<div class="a" style="left:700px;top:27px;width:324px;height:564px;background:#323232"></div>
<div class="hd" style="left:700px;top:27px;width:324px;height:10px"></div>
<div class="tab" style="left:700px;top:27px;width:33px;letter-spacing:-0.8px">プロパティ</div>
<div class="tabd" style="left:733px;top:27px;width:47px;letter-spacing:-1px">コードスニペット</div>
<!-- segmented -->
<div class="t" style="left:822px;top:48px;color:#7a7a7a">ツール</div>
<div class="a" style="left:850px;top:45px;width:1px;height:14px;background:#4a4a4a"></div>
<div class="t" style="left:858px;top:48px;color:#7a7a7a;letter-spacing:-1.6px">オブジェクト</div>
<div class="a" style="left:898px;top:45px;width:1px;height:14px;background:#4a4a4a"></div>
<div class="t" style="left:906px;top:48px;color:#7a7a7a;letter-spacing:-1.2px">フレーム</div>
<div class="a" style="left:937px;top:44px;width:48px;height:16px;background:#555;border-radius:2px"></div>
<div class="t" style="left:945px;top:49px;color:#e0e0e0;font-weight:bold;letter-spacing:-1.5px">ドキュメント</div>
<div class="a" style="left:700px;top:63px;width:324px;height:1px;background:#262626"></div>
<!-- doc info -->
<svg style="left:712px;top:68px" width="10" height="9" viewBox="0 0 10 9"><rect x="0.5" y="0.5" width="9" height="8" stroke="#cfcfcf" stroke-width="0.8" fill="none"/></svg>
<div class="t" style="left:713.5px;top:69px;font-size:6px;line-height:7px;color:#e0e0e0;letter-spacing:-0.3px">An</div>
<div class="t" style="left:734px;top:69px;color:#e8e8e8;font-size:7.5px">名称未設定 - 3</div>
<div class="t" style="left:734px;top:81px;color:#d0d0d0;font-size:6.5px;">HTML5 Canvas <span style="letter-spacing:-1.2px">ドキュメント</span></div>
<div class="a" style="left:700px;top:95px;width:324px;height:1px;background:#262626"></div>
<!-- 4 buttons -->
<div class="a" style="left:711px;top:100px;width:15px;height:15px;background:#5a5a5a;border:1px solid #6a6a6a;border-radius:3px"></div>
<svg style="left:714px;top:103px" width="9" height="9" viewBox="0 0 9 9"><path d="M1.5 9 V4.5 Q1.5 1 4.5 1 Q7.5 1 7.5 4.5 V9" stroke="#f4f4f4" stroke-width="2" fill="none"/></svg>
<div class="a" style="left:732px;top:100px;width:15px;height:15px;background:#5a5a5a;border:1px solid #6a6a6a;border-radius:3px"></div>
<svg style="left:735px;top:103px" width="9" height="9" viewBox="0 0 9 9"><path d="M0.5 1.5 H4 M2.2 0.5 V8.5" stroke="#f0f0f0" stroke-width="1.1" fill="none"/><path d="M8.5 3.3 H5 V5.3 H7.5 Q8.5 5.3 8.5 6.8 Q8.5 8.5 7 8.5 H5" stroke="#f0f0f0" stroke-width="1.1" fill="none"/></svg>
<div class="a" style="left:753px;top:100px;width:15px;height:15px;background:#262626;border:1px solid #4a4a4a;border-radius:3px"></div>
<svg style="left:756px;top:103px" width="9" height="9" viewBox="0 0 9 9"><path d="M1.5 9 V1.5 H9" stroke="#f0f0f0" stroke-width="2" fill="none"/></svg>
<div class="a" style="left:773px;top:100px;width:14px;height:15px;background:#262626;border:1px solid #4a4a4a;border-radius:3px"></div>
<svg style="left:777px;top:103px" width="6" height="8" viewBox="0 0 6 8"><path d="M1.3 3.5 V2.2 Q3 -0.3 4.7 2.2 V3.5" stroke="#f0f0f0" stroke-width="0.9" fill="none"/><rect x="0" y="3.5" width="6" height="4.5" fill="#f0f0f0"/><rect x="2.5" y="5" width="1" height="1.5" fill="#262626"/></svg>
<div class="a" style="left:700px;top:118px;width:324px;height:1px;background:#262626"></div>
<!-- publish settings -->
<svg style="left:711px;top:126px" width="7" height="4" viewBox="0 0 7 4"><path d="M0.6 0.6 L3.5 3.2 L6.4 0.6" stroke="#e0e0e0" stroke-width="1.1" fill="none"/></svg>
<div class="t" style="left:723px;top:124px;color:#e8e8e8;font-weight:bold;letter-spacing:-1px">パブリッシュ設定</div>
<div class="t" style="left:711px;top:141px;color:#cfcfcf;letter-spacing:-1.5px">プロファイル</div>
<div class="btn" style="left:751px;top:138px;width:197px;height:15px;text-align:left;padding-left:4px;line-height:13px">デフォルト</div>
<svg style="left:935px;top:143px" width="7" height="4" viewBox="0 0 7 4"><path d="M0.6 0.6 L3.5 3.2 L6.4 0.6" stroke="#e8e8e8" stroke-width="1.1" fill="none"/></svg>
<div class="btn" style="left:711px;top:154px;width:237px;height:15px;line-height:13px">その他の設定</div>
<div class="a" style="left:700px;top:173px;width:324px;height:1px;background:#262626"></div>
<!-- document settings -->
<svg style="left:711px;top:181px" width="7" height="4" viewBox="0 0 7 4"><path d="M0.6 0.6 L3.5 3.2 L6.4 0.6" stroke="#e0e0e0" stroke-width="1.1" fill="none"/></svg>
<div class="t" style="left:723px;top:179px;color:#e8e8e8;font-weight:bold;letter-spacing:-1px">ドキュメント 設定</div>
<div class="t" style="left:712px;top:197px;font-size:6.5px;color:#cfcfcf">W</div>
<div class="t blue" style="left:727px;top:197px;font-size:6.5px">640</div>
<div class="t" style="left:712px;top:210px;font-size:6.5px;color:#cfcfcf">H</div>
<div class="t blue" style="left:725px;top:210px;font-size:6.5px">480</div>
<svg style="left:750px;top:198px" width="10" height="18" viewBox="0 0 10 18"><path d="M0 1.3 H6.3 V4.5 M6.3 13.5 V16.8 H0" stroke="#aaa" stroke-width="0.8" fill="none"/><rect x="4" y="7.6" width="5.4" height="4.8" fill="#dcdcdc"/><rect x="6.3" y="9.2" width="0.9" height="1.6" fill="#333"/><path d="M5 7.6 V6 Q6.3 4.5 7.6 6" stroke="#cfcfcf" stroke-width="0.8" fill="none"/></svg>
<div class="t" style="left:712px;top:226px;color:#d0d0d0;letter-spacing:-1px">ステージ</div>
<div class="a" style="left:748px;top:225px;width:22px;height:10px;background:#fff;border-radius:2px"></div>
<div class="t" style="left:712px;top:239px;font-size:6.5px;color:#cfcfcf">FPS</div>
<div class="t blue" style="left:749px;top:239px;font-size:6.5px">12</div>
<div class="btn" style="left:782px;top:192px;width:166px;height:15px;line-height:13px;letter-spacing:-0.6px">コンテンツに合わせる</div>
<div class="a" style="left:782px;top:211px;width:8px;height:8px;border:1px solid #cfcfcf;border-radius:1px"></div>
<div class="t" style="left:794px;top:211px;color:#d0d0d0;letter-spacing:-0.6px">コンテンツを伸縮</div>
<div class="a" style="left:782px;top:225px;width:8px;height:8px;border:1px solid #cfcfcf;border-radius:1px"></div>
<div class="t" style="left:794px;top:225px;color:#d0d0d0;letter-spacing:-0.5px">ペーストボードに適用</div>
<div class="a" style="left:782px;top:240px;width:8px;height:8px;border:1px solid #cfcfcf;border-radius:1px"></div>
<div class="t" style="left:794px;top:240px;color:#d0d0d0">スパンを伸縮</div>
<div class="btn" style="left:711px;top:252px;width:237px;height:15px;line-height:13px">その他の設定</div>
<div class="a" style="left:700px;top:271px;width:324px;height:1px;background:#262626"></div>
<!-- library -->
<div class="a" style="left:700px;top:302px;width:324px;height:1px;background:#262626"></div>
<div class="hd" style="left:700px;top:303px;width:324px;height:10px"></div>
<div class="tab" style="left:700px;top:303px;width:33px;height:10px;line-height:10px;letter-spacing:-0.8px">ライブラリ</div>
<div class="tabd" style="left:733px;top:303px;width:33px;height:10px;line-height:10px;letter-spacing:-1px">アクション</div>
<div class="tabd" style="left:766px;top:303px;width:27px;height:10px;line-height:10px;letter-spacing:-1px">アセット</div>
<div class="a" style="left:703px;top:317px;width:330px;height:11px;background:#262626;border:1px solid #4c4c4c;border-radius:3px"></div>
<div class="t" style="left:708px;top:318px;color:#e0e0e0;font-size:7px">名称未設定 - 3</div>
<div class="a" style="left:700px;top:330px;width:324px;height:1px;background:#3a3a3a"></div>
<div class="a" style="left:700px;top:407px;width:324px;height:3px;background:#4a4a4a"></div>
<div class="t" style="left:702px;top:413px;color:#d8d8d8;letter-spacing:-1.2px">空のライブラリ</div>
<div class="a" style="left:795px;top:411px;width:240px;height:12px;background:#1e1e1e;border:1px solid #555;border-radius:3px"></div>
<svg style="left:799px;top:413px" width="8" height="8" viewBox="0 0 8 8"><circle cx="3.2" cy="3.2" r="2.4" stroke="#e8e8e8" stroke-width="1" fill="none"/><path d="M5 5 L7.5 7.5" stroke="#e8e8e8" stroke-width="1.2"/></svg>
<div class="t" style="left:710px;top:428px;color:#cfcfcf;font-size:6.5px">名前</div>
<svg style="left:730px;top:428px" width="5" height="7" viewBox="0 0 5 7"><path d="M2.5 7 V1 M0.5 3 L2.5 0.8 L4.5 3" stroke="#ddd" stroke-width="1" fill="none"/></svg>
<div class="a" style="left:833px;top:424px;width:1px;height:17px;background:#444"></div>
<div class="t" style="left:842px;top:428px;color:#bbb;font-size:6.5px;letter-spacing:-1px">リンケージ</div>
<div class="a" style="left:874px;top:424px;width:1px;height:17px;background:#444"></div>
<div class="t" style="left:883px;top:428px;color:#bbb;font-size:6.5px">使用数</div>
<div class="a" style="left:915px;top:424px;width:1px;height:17px;background:#444"></div>
<div class="t" style="left:924px;top:428px;color:#bbb;font-size:6.5px">修正日</div>
<div class="a" style="left:956px;top:424px;width:1px;height:17px;background:#444"></div>
<div class="t" style="left:965px;top:428px;color:#bbb;font-size:6.5px">種類</div>
<div class="a" style="left:997px;top:424px;width:1px;height:17px;background:#444"></div>
<div class="a" style="left:700px;top:441px;width:324px;height:1px;background:#3e3e3e"></div>
<div class="a" style="left:700px;top:441px;width:1px;height:144px;background:#3e3e3e"></div>
<svg style="left:702px;top:582px" width="36" height="8" viewBox="0 0 36 8"><rect x="0.5" y="0.5" width="6" height="7" stroke="#ccc" fill="none" stroke-width="0.8"/><path d="M2 4 H5" stroke="#ccc" stroke-width="1"/><path d="M8 1 H11 L12 2 H16 V7.5 H8 Z" fill="#dcdcdc"/><circle cx="21.5" cy="4" r="3.5" fill="#dcdcdc"/><rect x="21" y="2.5" width="1" height="3.5" fill="#323232"/><path d="M28 1.2 H34 M28.8 2 L29.3 7.5 H32.7 L33.2 2" stroke="#aaa" stroke-width="0.9" fill="none"/></svg>
</body></html>
